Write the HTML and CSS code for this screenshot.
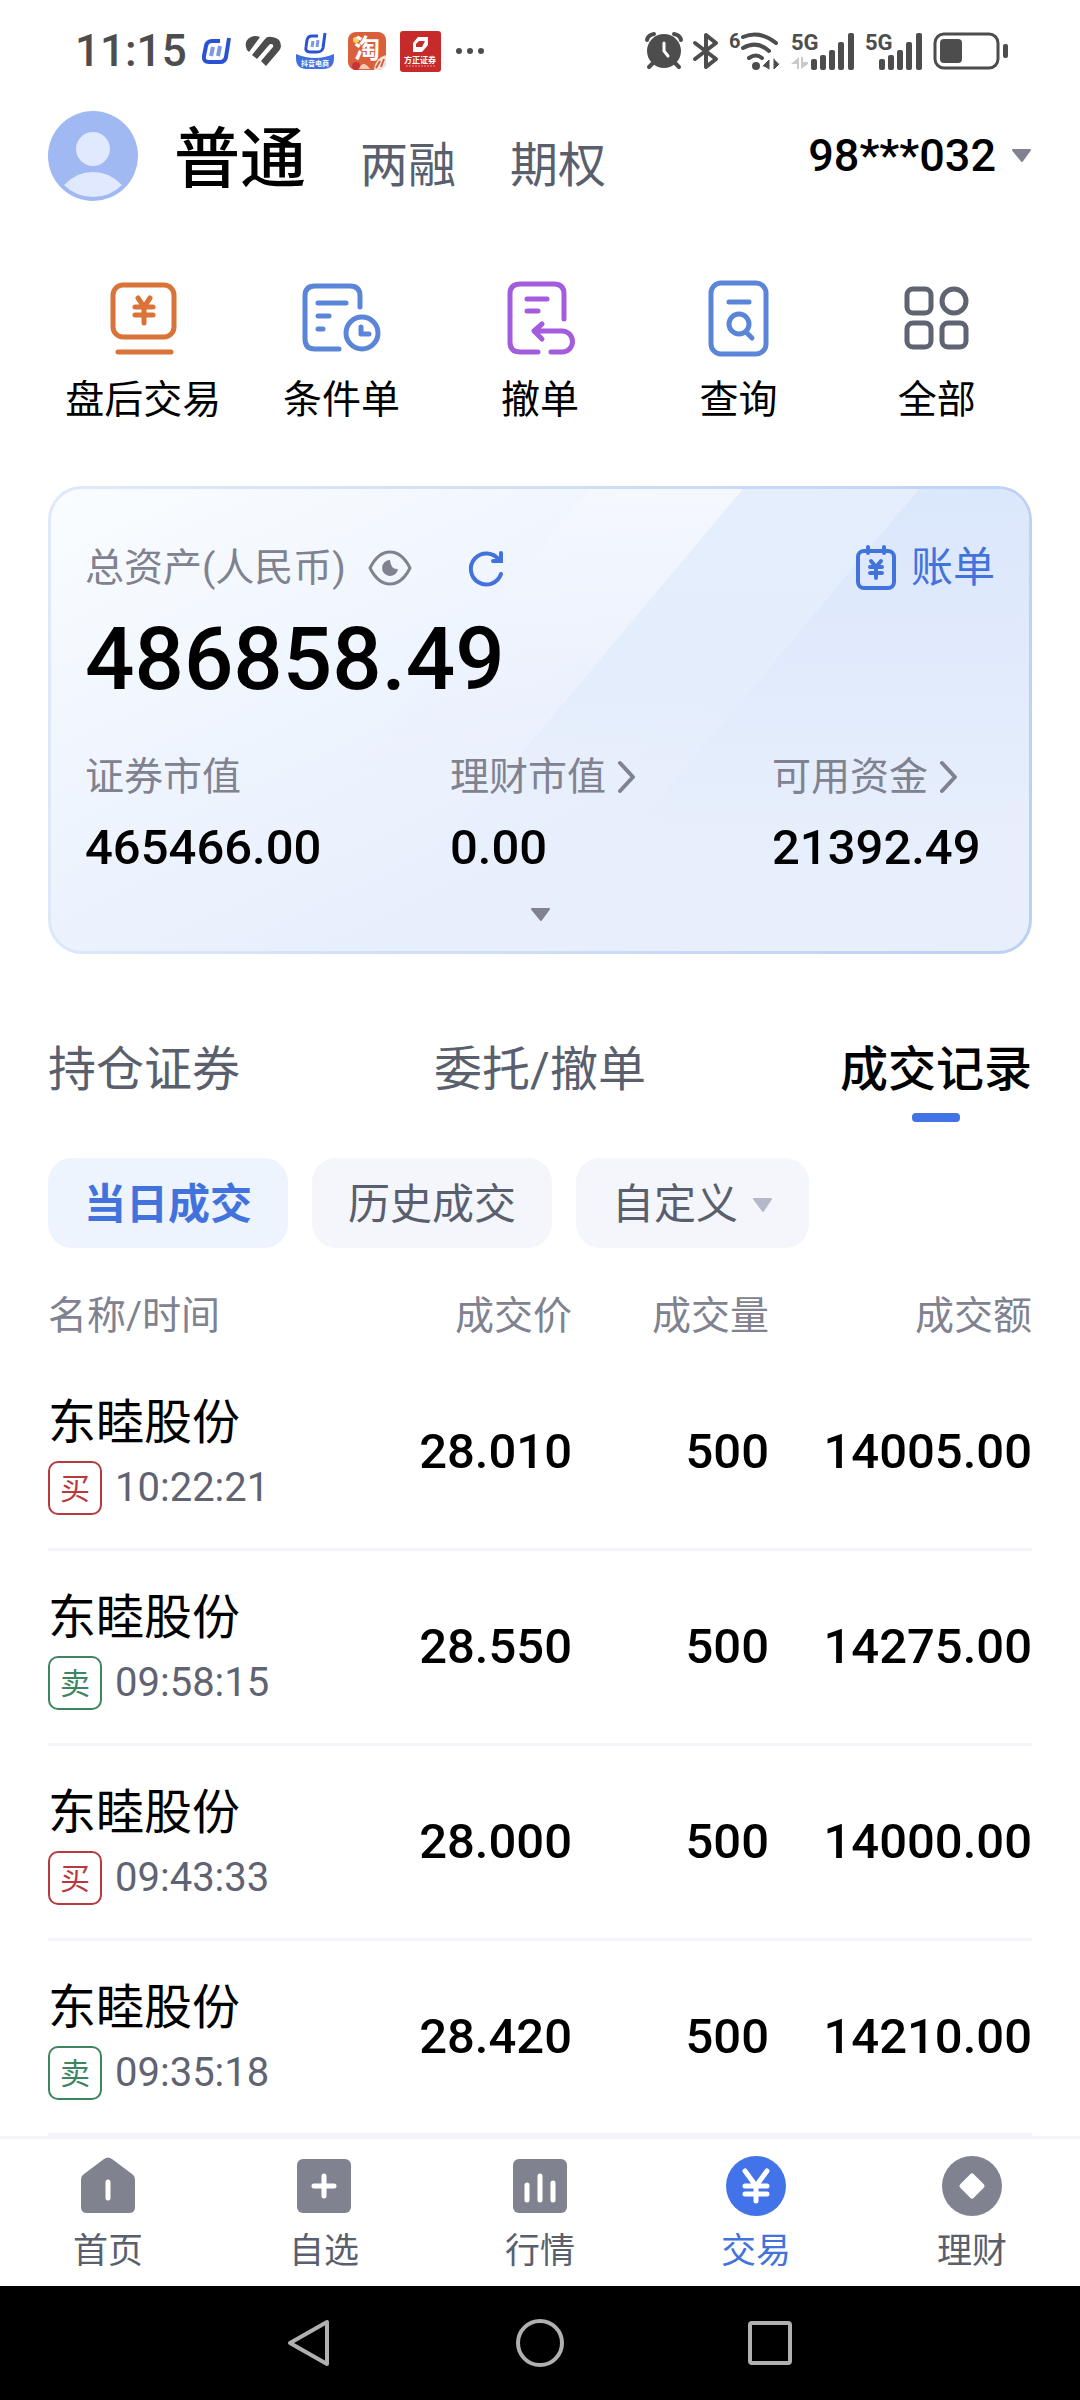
FILE: index.html
```
<!DOCTYPE html>
<html lang="zh-CN">
<head>
  <meta charset="UTF-8" />
  <meta name="viewport" content="width=device-width, initial-scale=1.0"/>
  <title>交易</title>
  <link rel="stylesheet" href="styles.css">
</head>
<body>
  <div class="status-bar">
    <div class="status-left">
      <span class="clock">11:15</span>
      <svg width="30" height="28" viewBox="0 0 30 28" fill="none" stroke="#2b52d6" stroke-width="4" stroke-linejoin="round">
        <path d="M19 4H11Q6 4 5 9L3 19Q2 25 8 25H19Q24 25 25 20L28 1"/>
        <path d="M12 10L10 19M19 9L17 19" stroke="#7d97ea"/>
      </svg>
      <svg width="37" height="32" viewBox="0 0 37 32" fill="#4d4d4d">
        <path d="M2 15Q-2 6 6 2Q10 0 15 2L4 17Z"/>
        <path d="M7 20L20 4Q22 1 27 2Q36 3 36 11Q36 14 33 17L21 31L16 26L28 12Q29 9 26 9Q25 9 24 10L12 24Z"/>
      </svg>
      <svg width="38" height="36" viewBox="0 0 38 36" fill="none">
        <path d="M22 3H16Q12 3 11 7L10 14Q9 19 14 19H21Q26 19 27 15L29 0" stroke="#2b52d6" stroke-width="3"/>
        <path d="M17 8L16 14M22 7L21 14" stroke="#7d97ea" stroke-width="3"/>
        <path d="M0 21Q19 29 38 21V25Q38 36 27 36H11Q0 36 0 25Z" fill="#3f6fe0"/>
        <text x="19" y="33" text-anchor="middle" font-size="7" font-weight="700" fill="#fff">抖音电商</text>
      </svg>
      <svg width="38" height="38" viewBox="0 0 38 38">
        <rect width="38" height="38" rx="8" fill="#d9603a"/>
        <circle cx="8" cy="8" r="3" fill="#ffd35c"/>
        <text x="19" y="26" text-anchor="middle" font-size="26" font-weight="700" fill="#fff">淘</text>
        <path d="M26 38Q27 26 38 23V30Q38 38 30 38Z" fill="#f3e3da"/>
        <path d="M28 36L32 29M33 35L36 27" stroke="#d9603a" stroke-width="2"/>
        <circle cx="8" cy="34" r="4" fill="#c8323c"/>
        <path d="M11 37Q15 27 22 37Z" fill="#f0cdb8"/>
      </svg>
      <svg width="41" height="41" viewBox="0 0 41 41">
        <rect width="41" height="41" rx="3" fill="#c62a2a"/>
        <path d="M18 6H28V14L22 21H13V12Z" fill="#fff"/>
        <path d="M19 10H25L22 16H16V13Z" fill="#c62a2a"/>
        <text x="20" y="32" text-anchor="middle" font-size="8" font-weight="700" fill="#fff">方正证券</text>
        <path d="M6 35H35" stroke="#e39a9a" stroke-dasharray="2 1"/>
      </svg>
      <svg width="30" height="8" viewBox="0 0 30 8" fill="#4d4d4d">
        <circle cx="4" cy="4" r="3"/><circle cx="15" cy="4" r="3"/><circle cx="26" cy="4" r="3"/>
      </svg>
    </div>
    <div class="status-right">
      <svg width="38" height="38" viewBox="0 0 38 38" fill="none" stroke="#4d4d4d" stroke-width="4" stroke-linecap="round">
        <circle cx="19" cy="19" r="17" fill="#4d4d4d" stroke="none"/>
        <path d="M2 8Q3 3 9 2M36 8Q35 3 29 2M8 31L4 35M30 31L34 35"/>
        <path d="M19 11V19L23 24" stroke="#fff" stroke-width="3"/>
      </svg>
      <svg width="26" height="38" viewBox="0 0 26 38" fill="none" stroke="#4d4d4d" stroke-width="4" stroke-linejoin="round" stroke-linecap="round">
        <path d="M2 11L23 27L13 35V3L23 11L2 27"/>
      </svg>
      <svg width="52" height="40" viewBox="0 0 52 40" fill="none" stroke="#4d4d4d" stroke-width="4" stroke-linecap="round">
        <text x="0" y="17" font-size="20" font-weight="700" fill="#4d4d4d" stroke="none">6</text>
        <path d="M14 6Q31 -1 47 12M14 17Q28 9 40 20M20 27Q27 22 33 27"/>
        <circle cx="27" cy="35" r="4" fill="#4d4d4d" stroke="none"/>
        <path d="M34 35L40 29V38M45 28V38L50 33" fill="#4d4d4d" stroke-width="1"/>
      </svg>
      <svg width="64" height="40" viewBox="0 0 64 40" fill="#4d4d4d">
        <text x="0" y="19" font-size="22" font-weight="700">5G</text>
        <path d="M0 33L8 26V38H6V33ZM10 26V38L17 33V31H12V26Z" fill="#c9c9c9"/>
        <rect x="20" y="28" width="6" height="11" rx="2"/><rect x="29" y="24" width="6" height="15" rx="2"/>
        <rect x="38" y="19" width="6" height="20" rx="2"/><rect x="47" y="11" width="6" height="28" rx="2"/>
        <rect x="57" y="2" width="6" height="37" rx="2"/>
      </svg>
      <svg width="58" height="40" viewBox="0 0 58 40" fill="#4d4d4d">
        <text x="0" y="19" font-size="22" font-weight="700">5G</text>
        <rect x="14" y="28" width="6" height="11" rx="2"/><rect x="23" y="24" width="6" height="15" rx="2"/>
        <rect x="32" y="19" width="6" height="20" rx="2"/><rect x="41" y="11" width="6" height="28" rx="2"/>
        <rect x="51" y="2" width="6" height="37" rx="2"/>
      </svg>
      <svg width="76" height="38" viewBox="0 0 76 38" fill="#4d4d4d">
        <rect x="2" y="2" width="63" height="34" rx="9" fill="none" stroke="#4d4d4d" stroke-width="3"/>
        <rect x="7" y="7" width="22" height="24" rx="4"/>
        <rect x="70" y="12" width="5" height="14" rx="2"/>
      </svg>
    </div>
  </div>

  <header class="header">
    <svg width="90" height="90" viewBox="0 0 90 90">
      <circle cx="45" cy="45" r="45" fill="#a0b9f2"/>
      <circle cx="45" cy="38" r="17" fill="#e0e9fd"/>
      <path d="M16 74Q28 61 45 61Q62 61 74 74Q62 86 45 86Q28 86 16 74Z" fill="#e0e9fd"/>
    </svg>
    <div class="account-types">
      <button class="type active">普通</button>
      <button class="type">两融</button>
      <button class="type">期权</button>
    </div>
    <button class="account">98***032
      <svg width="21" height="14" viewBox="0 0 21 14"><path d="M2 1H19L11 12Z" fill="#80828f" stroke="#80828f" stroke-width="2" stroke-linejoin="round"/></svg>
    </button>
  </header>

  <main>
    <nav class="actions">
      <a href="#" class="action">
        <svg class="orange" viewBox="0 0 80 80">
          <rect x="10" y="8" width="61" height="52" rx="10"/>
          <path d="M15 75H68M35 21L41 30L47 21M32 30H50M32 38H50M41 30V46"/>
        </svg>
        盘后交易
      </a>
      <a href="#" class="action">
        <svg class="blue" viewBox="0 0 80 80">
          <path d="M58 30V19Q58 9 48 9H13Q3 9 3 19V62Q3 72 13 72H37M16 26H44M16 39H27M16 52H21"/>
          <circle cx="60" cy="56" r="16"/>
          <path d="M59 50V57H67"/>
        </svg>
        条件单
      </a>
      <a href="#" class="action">
        <svg class="purple" viewBox="0 0 80 80">
          <path d="M64 42V17Q64 7 54 7H20Q10 7 10 17V65Q10 75 20 75H38M27 22H47M27 34H38"/>
          <path d="M42 47L34 54L42 62M34 54H62A10 10 0 0 1 62 75H51"/>
        </svg>
        撤单
      </a>
      <a href="#" class="action">
        <svg class="blue" viewBox="0 0 80 80">
          <rect x="13" y="6" width="55" height="71" rx="10"/>
          <circle cx="41" cy="47" r="10"/>
          <path d="M31 25H51M48 55L54 61"/>
        </svg>
        查询
      </a>
      <a href="#" class="action">
        <svg class="gray" viewBox="0 0 80 80">
          <rect x="10" y="12" width="24" height="24" rx="6"/>
          <circle cx="57" cy="24" r="12"/>
          <rect x="10" y="46" width="24" height="24" rx="6"/>
          <rect x="45" y="46" width="24" height="24" rx="6"/>
        </svg>
        全部
      </a>
    </nav>

    <section class="card">
      <svg class="card-bg" viewBox="0 0 978 462" preserveAspectRatio="none">
        <defs>
          <linearGradient id="bandA" x1="0" y1="0" x2="0" y2="1">
            <stop offset="0" stop-color="#f5f8ff"/><stop offset="0.5" stop-color="#eef3fd" stop-opacity="0.7"/><stop offset="1" stop-color="#e8eefc" stop-opacity="0"/>
          </linearGradient>
          <linearGradient id="bandB" x1="0" y1="0" x2="0" y2="1">
            <stop offset="0" stop-color="#e5eefd"/><stop offset="0.5" stop-color="#e4edfc"/><stop offset="1" stop-color="#e7eefc" stop-opacity="0"/>
          </linearGradient>
          <linearGradient id="bandC" x1="0" y1="0" x2="0" y2="1">
            <stop offset="0" stop-color="#dbe7fc"/><stop offset="0.4" stop-color="#e1eafc"/><stop offset="0.8" stop-color="#e6eefc"/><stop offset="1" stop-color="#e7eefc" stop-opacity="0"/>
          </linearGradient>
        </defs>
        <path d="M539 0H692L440 300H287Z" fill="url(#bandA)"/>
        <path d="M692 0H868L536 396H360Z" fill="url(#bandB)"/>
        <path d="M868 0H978V396H536Z" fill="url(#bandC)"/>
      </svg>
      <div class="card-top">
        <span>总资产(人民币)</span>
        <button class="eye" aria-label="隐藏金额">
          <svg width="44" height="36" viewBox="0 0 44 36" fill="none" stroke="#80828f" stroke-width="3">
            <path d="M2 18Q10 2 22 2Q34 2 42 18Q34 34 22 34Q10 34 2 18Z" stroke-linejoin="round"/>
            <path d="M22 10A8 8 0 1 0 30 19Q23 20 22 10Z" fill="#80828f" stroke="none"/>
          </svg>
        </button>
        <button class="refresh" aria-label="刷新">
          <svg width="36" height="36" viewBox="0 0 36 36" fill="none" stroke="#4273dc" stroke-width="4" stroke-linecap="round">
            <path d="M33 24A15.500 15.500 0 1 1 31 10M33 3V11H25"/>
          </svg>
        </button>
        <a href="#" class="bill">
          <svg width="42" height="46" viewBox="0 0 42 46" fill="none" stroke="#4273dc" stroke-width="4" stroke-linecap="round">
            <rect x="3" y="6" width="36" height="37" rx="6"/>
            <path d="M13 2V8M29 2V8M16 16L21 22L26 16M15 22H27M15 28H27M21 22V33"/>
          </svg>
          账单
        </a>
      </div>
      <div class="total">486858.49</div>
      <dl class="assets">
        <div>
          <dt>证券市值</dt>
          <dd>465466.00</dd>
        </div>
        <div>
          <dt>理财市值 <svg width="18" height="32" viewBox="0 0 18 32"><path d="M2 2L15 16L2 30"/></svg></dt>
          <dd>0.00</dd>
        </div>
        <div>
          <dt>可用资金 <svg width="18" height="32" viewBox="0 0 18 32"><path d="M2 2L15 16L2 30"/></svg></dt>
          <dd>21392.49</dd>
        </div>
      </dl>
      <button class="expand" aria-label="展开">
        <svg width="21" height="14" viewBox="0 0 21 14"><path d="M2 1H19L11 12Z" fill="#80828f" stroke="#80828f" stroke-width="2" stroke-linejoin="round"/></svg>
      </button>
    </section>

    <div class="tabs">
      <button class="tab">持仓证券</button>
      <button class="tab">委托/撤单</button>
      <button class="tab active">成交记录</button>
    </div>

    <div class="chips">
      <button class="chip active">当日成交</button>
      <button class="chip">历史成交</button>
      <button class="chip">自定义
        <svg width="21" height="15" viewBox="0 0 21 15"><path d="M2 1H19L11 13Z" fill="#b4b8c8" stroke="#b4b8c8" stroke-width="2" stroke-linejoin="round"/></svg>
      </button>
    </div>

    <table class="trades">
      <thead>
        <tr>
          <th class="col-name">名称/时间</th>
          <th class="col-price">成交价</th>
          <th class="col-qty">成交量</th>
          <th>成交额</th>
        </tr>
      </thead>
      <tbody>
        <tr>
          <td><div class="name">东睦股份</div><div class="time"><span class="tag buy">买</span>10:22:21</div></td>
          <td>28.010</td><td>500</td><td>14005.00</td>
        </tr>
        <tr>
          <td><div class="name">东睦股份</div><div class="time"><span class="tag sell">卖</span>09:58:15</div></td>
          <td>28.550</td><td>500</td><td>14275.00</td>
        </tr>
        <tr>
          <td><div class="name">东睦股份</div><div class="time"><span class="tag buy">买</span>09:43:33</div></td>
          <td>28.000</td><td>500</td><td>14000.00</td>
        </tr>
        <tr>
          <td><div class="name">东睦股份</div><div class="time"><span class="tag sell">卖</span>09:35:18</div></td>
          <td>28.420</td><td>500</td><td>14210.00</td>
        </tr>
      </tbody>
    </table>
  </main>

  <nav class="tab-bar">
    <a href="#">
      <svg viewBox="0 0 60 60"><path d="M26 3Q30 0 34 3L54 18Q57 20 57 24V51Q57 57 51 57H9Q3 57 3 51V24Q3 20 6 18Z"/><path class="cut" d="M30 26V42"/></svg>
      首页
    </a>
    <a href="#">
      <svg viewBox="0 0 60 60"><rect x="3" y="3" width="54" height="54" rx="6"/><path class="cut" d="M30 20V40M20 30H40"/></svg>
      自选
    </a>
    <a href="#">
      <svg viewBox="0 0 60 60"><rect x="3" y="3" width="54" height="54" rx="6"/><path class="cut" d="M17 29V44M30 20V44M43 27V44"/></svg>
      行情
    </a>
    <a href="#" class="active">
      <svg viewBox="0 0 60 60"><circle cx="30" cy="30" r="30"/><path class="cut" d="M19 15L30 30L41 15M19 30H41M19 38H41M30 30V45"/></svg>
      交易
    </a>
    <a href="#">
      <svg viewBox="0 0 60 60"><circle cx="30" cy="30" r="30"/><path class="cut diamond" d="M30 20L40 30L30 40L20 30Z"/></svg>
      理财
    </a>
  </nav>

  <div class="system-nav">
    <button aria-label="返回"><svg width="48" height="48" viewBox="0 0 48 48"><path d="M4 24L41 3V45Z"/></svg></button>
    <button aria-label="主页"><svg width="48" height="48" viewBox="0 0 48 48"><circle cx="24" cy="24" r="22"/></svg></button>
    <button aria-label="最近任务"><svg width="48" height="48" viewBox="0 0 48 48"><rect x="4" y="4" width="40" height="40" rx="2"/></svg></button>
  </div>
</body>
</html>
```

FILE: styles.css
```
* {
  box-sizing: border-box;
}
body {
  margin: 0;
  min-height: 100vh;
  display: flex;
  flex-direction: column;
  font-family: Roboto, 'Noto Sans CJK SC', sans-serif;
  background-color: #fff;
  color: #000;
}
button {
  padding: 0;
  border: none;
  background: none;
  font-family: inherit;
  color: inherit;
  cursor: pointer;
}
a {
  color: inherit;
  text-decoration: none;
}
svg {
  display: block;
  flex-shrink: 0;
  overflow: visible;
}
main {
  flex: 1;
}

/* status bar */
.status-bar {
  height: 102px;
  padding: 0 71px 0 75px;
  display: flex;
  align-items: center;
  justify-content: space-between;
  color: #4d4d4d;
}
.status-left, .status-right {
  display: flex;
  align-items: center;
}
.status-left {
  gap: 14px;
}
.status-right {
  gap: 10px;
}
.clock {
  font-size: 44px;
  line-height: 44px;
  font-weight: 500;
}

/* header */
.header {
  height: 108px;
  padding: 0 48px;
  display: flex;
  align-items: center;
}
.account-types {
  flex: 1;
  display: flex;
  align-items: baseline;
  gap: 54px;
  margin-left: 36px;
  padding-top: 14px;
}
.type {
  font-size: 48px;
  line-height: 66px;
  color: #5a5f6e;
}
.type.active {
  font-size: 66px;
  font-weight: 500;
  color: #000;
}
.account {
  display: flex;
  align-items: center;
  gap: 15px;
  font-size: 45px;
  line-height: 44px;
  font-weight: 500;
}

/* shortcuts */
.actions {
  display: grid;
  grid-template-columns: repeat(5, 1fr);
  padding: 67px 44px 66px;
}
.action {
  display: flex;
  flex-direction: column;
  align-items: center;
  gap: 23px;
  font-size: 39px;
  line-height: 40px;
}
.action svg {
  width: 80px;
  height: 80px;
  fill: none;
  stroke-width: 5;
  stroke-linecap: round;
  stroke-linejoin: round;
}
.orange { stroke: #d97338; }
.blue { stroke: #5b85d9; }
.purple { stroke: #a35cdb; }
.gray { stroke: #5f6372; }

/* asset card */
.card {
  position: relative;
  margin: 0 48px;
  padding: 59px 34px 29px;
  border: 3px solid transparent;
  border-radius: 34px;
  background:
    linear-gradient(155deg, #fafdff 0%, #eff5fe 35%, #e7eefc 70%) padding-box,
    linear-gradient(100deg, #dfe9f9 0%, #d0def6 50%, #bcd0f3 100%) border-box;
}
.card > * {
  position: relative;
}
.card .card-bg {
  position: absolute;
  top: 0;
  left: 0;
  width: 100%;
  height: 100%;
  border-radius: 31px;
  overflow: hidden;
}
.card-top {
  display: flex;
  align-items: center;
  height: 40px;
  font-size: 39px;
  line-height: 40px;
  color: #80828f;
}
.eye {
  margin-left: 22px;
}
.refresh {
  margin-left: 56px;
}
.bill {
  display: flex;
  align-items: center;
  gap: 14px;
  margin-left: auto;
  font-size: 42px;
  color: #4273dc;
}
.total {
  margin-top: 27px;
  font-size: 87px;
  line-height: 88px;
  font-weight: 500;
}
.assets {
  display: grid;
  grid-template-columns: 365fr 322fr 223fr;
  margin: 54px 0 35px;
}
dt {
  display: flex;
  align-items: center;
  gap: 12px;
  font-size: 39px;
  line-height: 40px;
  color: #80828f;
}
dt svg {
  fill: none;
  stroke: #80828f;
  stroke-width: 4;
  stroke-linecap: round;
  stroke-linejoin: round;
}
dd {
  margin: 26px 0 0;
  font-size: 49px;
  line-height: 50px;
  font-weight: 500;
}
.expand {
  display: block;
  margin: 0 auto;
}

/* tabs and filters */
.tabs {
  display: flex;
  justify-content: space-between;
  align-items: flex-start;
  margin: 90px 48px 36px;
}
.tab {
  font-size: 48px;
  line-height: 52px;
  color: #5a5f6e;
}
.tab.active {
  font-weight: 500;
  color: #000;
}
.tab.active::after {
  content: "";
  display: block;
  width: 48px;
  height: 9px;
  margin: 17px auto 0;
  border-radius: 4px;
  background-color: #4273e5;
}
.chips {
  display: flex;
  gap: 24px;
  padding: 0 48px;
}
.chip {
  display: flex;
  align-items: center;
  gap: 14px;
  height: 90px;
  padding: 4px 36px 0;
  border-radius: 24px;
  background-color: #f4f6fb;
  font-size: 42px;
  line-height: 42px;
  color: #5a5f6e;
}
.chip.active {
  background-color: #eef4fe;
  font-weight: 700;
  color: #4273dc;
}

/* trade list */
.trades {
  width: calc(100% - 96px);
  margin: 0 48px;
  table-layout: fixed;
  border-spacing: 0;
}
th {
  padding: 48px 0 20px;
  font-size: 39px;
  line-height: 40px;
  font-weight: 400;
  text-align: right;
  color: #80828f;
}
.col-name {
  width: 303px;
}
.col-price {
  width: 221px;
}
.col-qty {
  width: 197px;
}
td {
  height: 195px;
  padding: 0;
  border-bottom: 3px solid #f4f5fa;
  font-size: 49px;
  line-height: 50px;
  font-weight: 500;
  text-align: right;
}
th:first-child, td:first-child {
  text-align: left;
}
td:first-child {
  padding-top: 8px;
}
.name {
  font-size: 48px;
  line-height: 52px;
  font-weight: 400;
}
.time {
  display: flex;
  align-items: center;
  gap: 13px;
  margin-top: 12px;
  font-size: 40px;
  font-weight: 400;
  color: #5f6372;
}
.tag {
  width: 54px;
  height: 54px;
  border: 2px solid;
  border-radius: 10px;
  font-size: 30px;
  line-height: 52px;
  text-align: center;
}
.buy { color: #b83a3e; }
.sell { color: #3c8560; }

/* bottom bars */
.tab-bar {
  display: grid;
  grid-template-columns: repeat(5, 1fr);
  padding: 17px 0 16px;
  border-top: 3px solid #f4f5fa;
}
.tab-bar a {
  display: flex;
  flex-direction: column;
  align-items: center;
  gap: 18px;
  font-size: 35px;
  line-height: 36px;
  color: #5a5f6e;
}
.tab-bar svg {
  width: 60px;
  height: 60px;
  fill: #80828f;
}
.tab-bar .cut {
  fill: none;
  stroke: #fff;
  stroke-width: 5;
  stroke-linecap: round;
  stroke-linejoin: round;
}
.tab-bar .diamond {
  fill: #fff;
}
.tab-bar .active {
  color: #4273dc;
}
.tab-bar .active svg {
  fill: #4273e8;
}
.system-nav {
  display: flex;
  align-items: center;
  justify-content: center;
  gap: 182px;
  height: 114px;
  background-color: #000;
}
.system-nav svg {
  fill: none;
  stroke: #b0b0b0;
  stroke-width: 4;
  stroke-linejoin: round;
}
```
